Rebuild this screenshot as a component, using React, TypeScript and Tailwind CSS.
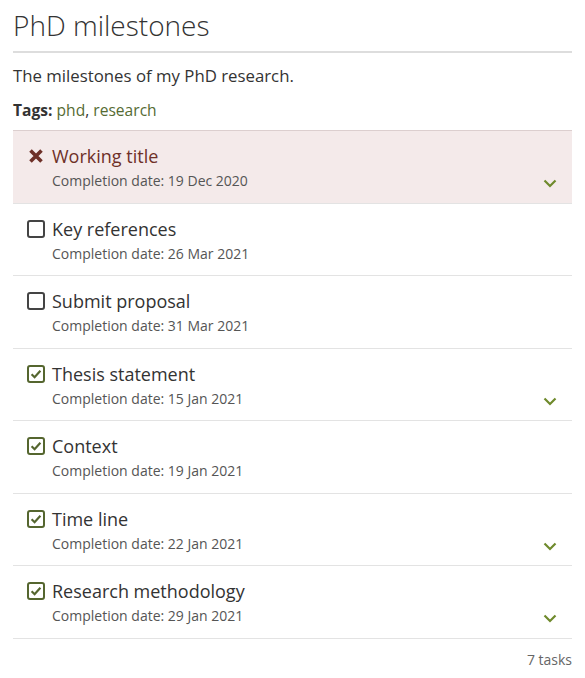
import React from "react";

type Task = { title: string; date: string; status: "failed" | "open" | "done"; chevron: boolean };

const tasks: Task[] = [
  { title: "Working title", date: "19 Dec 2020", status: "failed", chevron: true },
  { title: "Key references", date: "26 Mar 2021", status: "open", chevron: false },
  { title: "Submit proposal", date: "31 Mar 2021", status: "open", chevron: false },
  { title: "Thesis statement", date: "15 Jan 2021", status: "done", chevron: true },
  { title: "Context", date: "19 Jan 2021", status: "done", chevron: false },
  { title: "Time line", date: "22 Jan 2021", status: "done", chevron: true },
  { title: "Research methodology", date: "29 Jan 2021", status: "done", chevron: true },
];

function StatusIcon({ status }: { status: Task["status"] }) {
  if (status === "failed") {
    return (
      <svg width="18" height="18" viewBox="0 0 18 18" className="shrink-0">
        <path d="M3.5 3.5 L14.5 14.5 M14.5 3.5 L3.5 14.5" stroke="#6e3028" strokeWidth="3.6" strokeLinecap="butt" />
      </svg>
    );
  }
  if (status === "open") {
    return (
      <svg width="18" height="18" viewBox="0 0 18 18" className="shrink-0">
        <rect x="1" y="1" width="16" height="16" rx="2" fill="none" stroke="#444" strokeWidth="2" />
      </svg>
    );
  }
  return (
    <svg width="18" height="18" viewBox="0 0 18 18" className="shrink-0">
      <rect x="1" y="1" width="16" height="16" rx="2" fill="none" stroke="#55662f" strokeWidth="2" />
      <path d="M4.6 9.2 L7.6 12.2 L13.4 5.8" fill="none" stroke="#55662f" strokeWidth="2.2" />
    </svg>
  );
}

function Chevron() {
  return (
    <svg width="14" height="9" viewBox="0 0 14 9">
      <path d="M1.5 1.5 L7 7 L12.5 1.5" fill="none" stroke="#6f8a2c" strokeWidth="2.2" />
    </svg>
  );
}

export default function App() {
  return (
    <div
      className="bg-white px-[13px] pt-[6px] text-[#333]"
      style={{ fontFamily: '"Open Sans", "Noto Sans", sans-serif' }}
    >
      <h1 className="text-[28px] font-light leading-[38px] text-[#333] pb-[7px] border-b-2 border-[#ddd]">
        PhD milestones
      </h1>
      <p className="mt-[12px] text-[16.8px] leading-[22px] text-[#333]">The milestones of my PhD research.</p>
      <p className="mt-[12px] text-[15.6px] leading-[22px] text-[#333]">
        <span className="font-bold">Tags:</span>{" "}
        <span className="text-[#566b33]">phd</span>, <span className="text-[#566b33]">research</span>
      </p>
      <ul className="mt-[9px] border-b border-[#e3e3e3]">
        {tasks.map((t, i) => (
          <li
            key={i}
            className={`flex items-start gap-[7px] border-t pl-[14px] pr-[15px] pt-[13px] pb-[11.5px] ${
              t.status === "failed" ? "bg-[#f4eaea] border-[#dccfcf]" : "border-[#e3e3e3]"
            }`}
          >
            <div className="pt-[3px]">
              <StatusIcon status={t.status} />
            </div>
            <div className="flex-1 min-w-0">
              <div
                className={`text-[18px] leading-[25px] ${t.status === "failed" ? "text-[#6e3028]" : "text-[#333]"}`}
              >
                {t.title}
              </div>
              <div className="mt-[1px] text-[14px] leading-[21px] text-[#555]">Completion date: {t.date}</div>
            </div>
            <div className="self-end pb-[3px] w-[14px]">{t.chevron ? <Chevron /> : null}</div>
          </li>
        ))}
      </ul>
      <div className="text-right text-[14px] leading-[20px] text-[#666] pt-[11px]">7 tasks</div>
    </div>
  );
}
